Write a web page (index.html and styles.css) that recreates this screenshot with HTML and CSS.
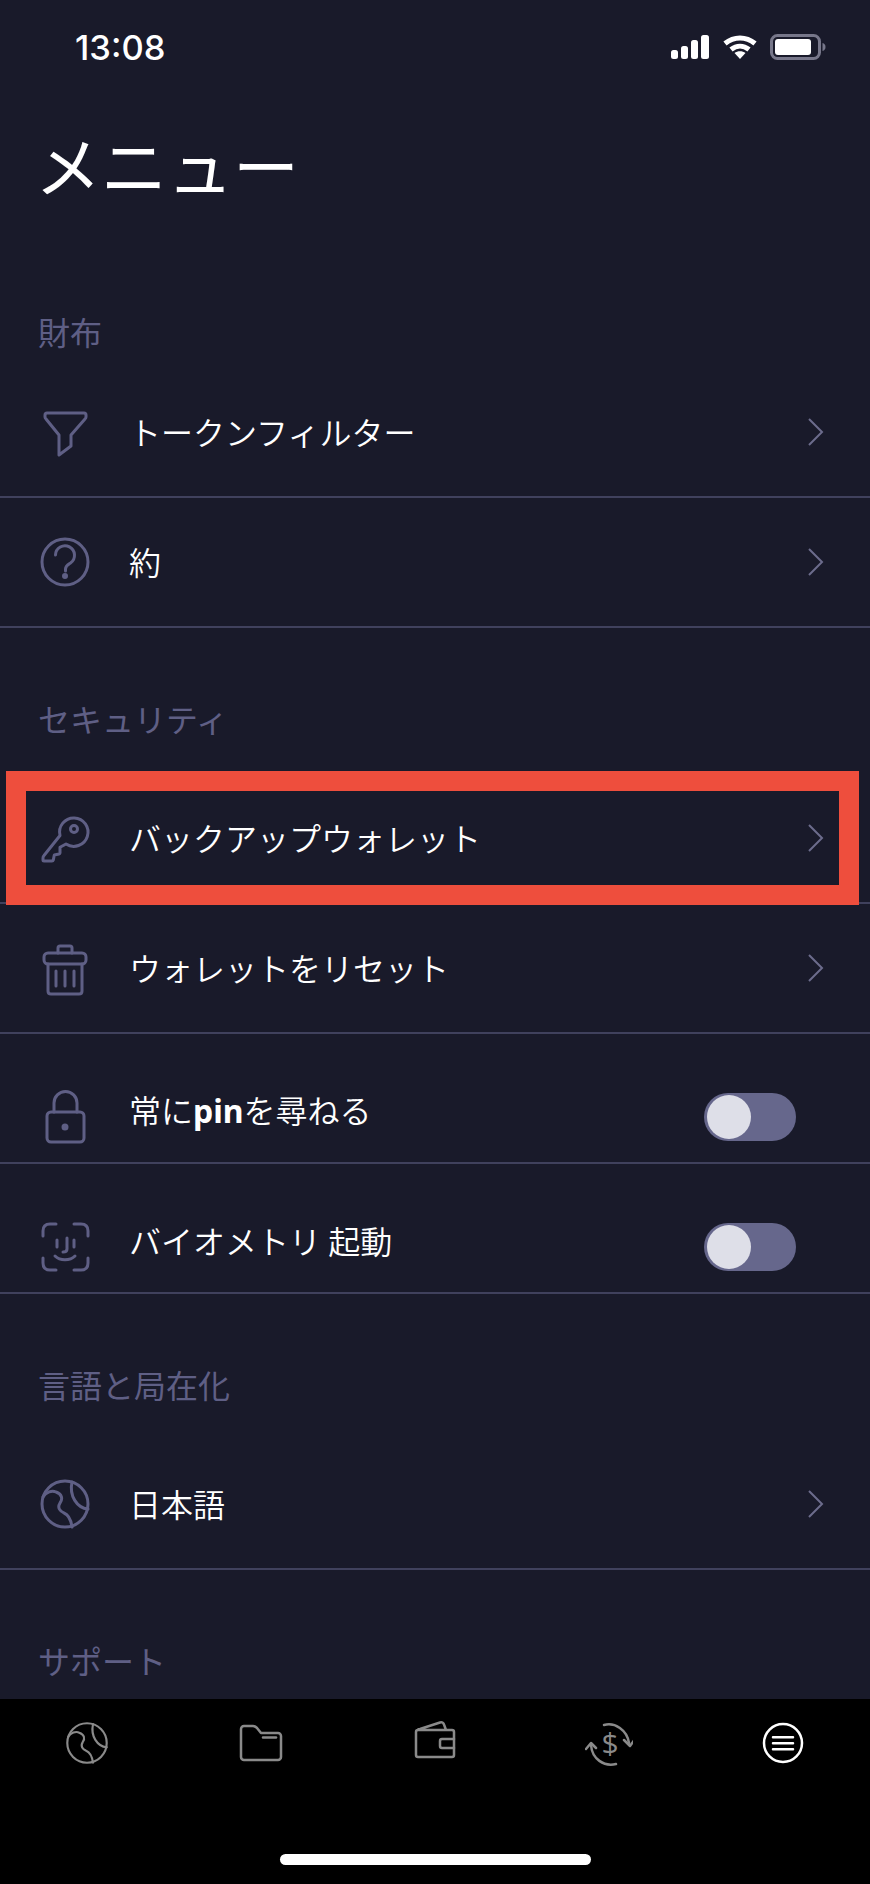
FILE: index.html
```html
<!DOCTYPE html>
<html lang="ja">
<head>
    <meta charset="UTF-8">
    <meta name="viewport" content="width=device-width, initial-scale=1.0">
    <title>メニュー</title>
    <link rel="stylesheet" href="styles.css">
</head>
<body>
    <svg class="defs" width="0" height="0">
        <symbol id="globe" viewBox="0 0 56 56">
            <circle cx="28" cy="28" r="23"/>
            <path d="M35 6c-3 14 5 26 16 27"/>
            <path d="M6 21c3-5 9-7 13-5 6 2 7 7 4 11-3 5 0 8 4 10 5 2 7 7 8 14"/>
        </symbol>
        <symbol id="chevron" viewBox="0 0 18 32">
            <path d="M3 3l13 13L3 29"/>
        </symbol>
    </svg>

    <div class="screen">
        <div class="status-bar">
            <span class="time">13:08</span>
            <div class="status-icons">
                <svg class="signal" width="40" height="26" viewBox="0 0 40 26">
                    <rect x="1" y="16" width="7" height="9" rx="2.500"/>
                    <rect x="11" y="12" width="7" height="13" rx="2.500"/>
                    <rect x="21" y="6" width="7" height="19" rx="2.500"/>
                    <rect x="31" y="1" width="8" height="24" rx="2.500"/>
                </svg>
                <svg class="wifi" width="36" height="26" viewBox="0 0 36 26">
                    <path d="M3 9.500c9-7.500 21-7.500 30 0"/>
                    <path d="M9 15.500c5.500-4.500 12.500-4.500 18 0"/>
                    <path class="wifi-dot" d="M12.500 19c3-2.300 8-2.300 11 0L18 25z"/>
                </svg>
                <svg class="battery" width="56" height="26" viewBox="0 0 56 26">
                    <rect class="battery-case" x="1.500" y="1.500" width="48" height="23" rx="6"/>
                    <rect class="battery-level" x="5" y="5" width="36" height="16" rx="3"/>
                    <path class="battery-cap" d="M52.500 9c2 .5 3 2 3 4s-1 3.500-3 4z"/>
                </svg>
            </div>
        </div>

        <h1 class="page-title">メニュー</h1>

        <div class="menu">
            <h2 class="section-title">財布</h2>
            <div class="row">
                <svg class="row-icon" viewBox="0 0 56 56">
                    <path d="M10 9h37q2 0 2 2v2q0 1-1 2L34 31v11L22 51V31L9 15q-1-1-1-2v-2q0-2 2-2z"/>
                </svg>
                <span class="row-label">トークンフィルター</span>
                <svg class="chevron"><use href="#chevron"/></svg>
            </div>
            <div class="row">
                <svg class="row-icon" viewBox="0 0 56 56">
                    <circle cx="28" cy="28" r="23"/>
                    <path d="M18.500 21a9.500 9.500 0 1 1 15 8c-3 2-5 3-5 6v2"/>
                    <circle class="solid" cx="28" cy="42" r="1.500"/>
                </svg>
                <span class="row-label">約</span>
                <svg class="chevron"><use href="#chevron"/></svg>
            </div>

            <h2 class="section-title">セキュリティ</h2>
            <div class="row">
                <svg class="row-icon" viewBox="0 0 56 56">
                    <path d="M29 34A14.200 14.200 0 1 0 23 25.500L7 45.500Q6 46.500 6 48V50Q6 51 7 51H15Q16 51 16.300 50L17.300 45 22 44Q23 43.700 23 43V37.300Z"/>
                    <circle cx="37" cy="19" r="3.500"/>
                </svg>
                <span class="row-label">バックアップウォレット</span>
                <svg class="chevron"><use href="#chevron"/></svg>
                <div class="highlight"></div>
            </div>
            <div class="row">
                <svg class="row-icon" viewBox="0 0 56 56">
                    <rect x="7" y="13" width="42" height="11" rx="4"/>
                    <path d="M21 13V8q0-2 2-2h10q2 0 2 2v5"/>
                    <path d="M11 24v27q0 3 3 3h28q3 0 3-3V24"/>
                    <path d="M19 31v15M28 31v15M37 31v15"/>
                </svg>
                <span class="row-label">ウォレットをリセット</span>
                <svg class="chevron"><use href="#chevron"/></svg>
            </div>
            <div class="row row-switch">
                <svg class="row-icon" viewBox="0 0 56 56">
                    <rect x="10" y="23" width="37" height="30" rx="4"/>
                    <path d="M17 23v-9a11.500 11.500 0 0 1 23 0v9"/>
                    <circle class="solid" cx="28" cy="38" r="2"/>
                </svg>
                <span class="row-label">常に<b>pin</b>を尋ねる</span>
                <div class="switch"><div class="knob"></div></div>
            </div>
            <div class="row row-switch">
                <svg class="row-icon" viewBox="0 0 56 56">
                    <path d="M6 17v-5q0-7 7-7h6M37 5h7q7 0 7 7v5M51 39v5q0 7-7 7h-7M19 51h-6q-7 0-7-7v-5"/>
                    <path d="M20 21v7M37 21v7M30 19v11q0 3-4 3"/>
                    <path d="M18 37c5 5 15 5 20 0"/>
                </svg>
                <span class="row-label">バイオメトリ 起動</span>
                <div class="switch"><div class="knob"></div></div>
            </div>

            <h2 class="section-title">言語と局在化</h2>
            <div class="row">
                <svg class="row-icon globe"><use href="#globe"/></svg>
                <span class="row-label">日本語</span>
                <svg class="chevron"><use href="#chevron"/></svg>
            </div>

            <h2 class="section-title">サポート</h2>
        </div>

        <div class="tab-bar">
            <div class="tabs">
                <svg class="tab-icon globe"><use href="#globe"/></svg>
                <svg class="tab-icon" viewBox="0 0 48 48">
                    <path d="M4 10a3 3 0 0 1 3-3h9c2 0 3 1 4 2l4 5h17a3 3 0 0 1 3 3v21a3 3 0 0 1-3 3H7a3 3 0 0 1-3-3z"/>
                    <path d="M26 18.500h13"/>
                </svg>
                <svg class="tab-icon" viewBox="0 0 48 48">
                    <path d="M7 11h34q2 0 2 2v23q0 2-2 2H7q-2 0-2-2V13q0-2 2-2 0-1 2-1L29 3.500q3-1 4 2L35 11"/>
                    <path d="M43 20H31q-2 0-2 2v5q0 2 2 2h12"/>
                </svg>
                <svg class="tab-icon" viewBox="0 0 48 48">
                    <path d="M19 6c11-3 23 5 25 18"/>
                    <path d="M39 21l6 6 5-7"/>
                    <path d="M31 45c-12 3-24-5-25-19"/>
                    <path d="M1 30l5-6 5 5"/>
                    <text class="dollar" x="25" y="35" text-anchor="middle">$</text>
                </svg>
                <svg class="tab-icon tab-active" viewBox="0 0 48 48">
                    <circle cx="24" cy="24" r="19"/>
                    <path d="M14 18.300h20M14 24.300h20M14 30.300h20"/>
                </svg>
            </div>
            <div class="home-indicator"></div>
        </div>
    </div>
</body>
</html>
```

FILE: styles.css
```css
* {
    box-sizing: border-box;
}
body {
    margin: 0;
    background: #191a2a;
    font-family: "Noto Sans CJK JP", "Noto Sans", sans-serif;
    color: #fff;
}
.defs {
    display: block;
    height: 0;
}
.screen {
    width: 870px;
    height: 1884px;
    display: flex;
    flex-direction: column;
    overflow: hidden;
}

/* status bar */
.status-bar {
    height: 94px;
    flex: none;
    display: flex;
    align-items: center;
    justify-content: space-between;
    padding: 0 44px 0 75px;
}
.time {
    font-family: Inter, sans-serif;
    font-size: 34.500px;
    font-weight: 500;
}
.status-icons {
    display: flex;
    align-items: center;
    gap: 12px;
}
.signal {
    fill: #fff;
}
.wifi {
    fill: none;
    stroke: #fff;
    stroke-width: 5;
}
.wifi-dot {
    fill: #fff;
    stroke: none;
}
.battery-case {
    fill: none;
    stroke: #77778a;
    stroke-width: 3;
}
.battery-level {
    fill: #fff;
}
.battery-cap {
    fill: #77778a;
}

.page-title {
    flex: none;
    margin: 0;
    padding: 39px 0 29px 35px;
    font-size: 66px;
    line-height: 60px;
    font-weight: 400;
}

/* list */
.menu {
    flex: 1;
    min-height: 0;
    overflow: hidden;
}
.section-title {
    margin: 0;
    height: 146px;
    padding: 70px 0 0 38px;
    font-size: 32px;
    line-height: 40px;
    font-weight: 400;
    color: #5f5f85;
}
.section-title:first-child {
    padding-top: 89px;
}
.row {
    position: relative;
    height: 130px;
    display: flex;
    align-items: center;
    padding-left: 37px;
    border-bottom: 2px solid #40415d;
}
.row-icon {
    flex: none;
    width: 56px;
    height: 56px;
    margin-right: 36px;
    fill: none;
    stroke: #5f5f85;
    stroke-width: 3;
    stroke-linecap: round;
    stroke-linejoin: round;
}
.row-icon .solid {
    fill: #5f5f85;
}
.row-label {
    margin-bottom: 3px;
    font-size: 32px;
    line-height: 40px;
    font-weight: 350;
}
.row-label b {
    font-family: "Noto Sans", sans-serif;
    font-weight: 700;
}
.chevron {
    width: 18px;
    height: 32px;
    margin-left: auto;
    margin-right: 46px;
    fill: none;
    stroke: #6c6c8c;
    stroke-width: 2;
}
.row-switch .row-icon,
.row-switch .switch {
    margin-top: 38px;
}
.row-switch .row-label {
    margin-top: 27px;
}
.switch {
    width: 92px;
    height: 48px;
    margin-left: auto;
    margin-right: 74px;
    padding: 2px 3px;
    border-radius: 24px;
    background: #66678c;
}
.knob {
    width: 44px;
    height: 44px;
    border-radius: 50%;
    background: #dedfe8;
}
.highlight {
    position: absolute;
    top: -3px;
    bottom: -3px;
    left: 6px;
    right: 11px;
    border: 20px solid #ee4e3d;
}

/* tab bar */
.tab-bar {
    flex: none;
    position: relative;
    height: 185px;
    background: #000;
}
.tabs {
    display: grid;
    grid-template-columns: repeat(5, 174px);
    justify-items: center;
    padding-top: 20px;
}
.tab-icon {
    width: 48px;
    height: 48px;
    fill: none;
    stroke: #8a8a8a;
    stroke-width: 2.500;
    stroke-linecap: round;
    stroke-linejoin: round;
}
.tab-active {
    stroke: #fff;
}
.dollar {
    font-family: "Open Sans", sans-serif;
    font-size: 30px;
    font-weight: 400;
    fill: #8a8a8a;
    stroke: none;
}
.home-indicator {
    position: absolute;
    left: 280px;
    bottom: 19px;
    width: 311px;
    height: 11px;
    border-radius: 6px;
    background: #fff;
}
```
